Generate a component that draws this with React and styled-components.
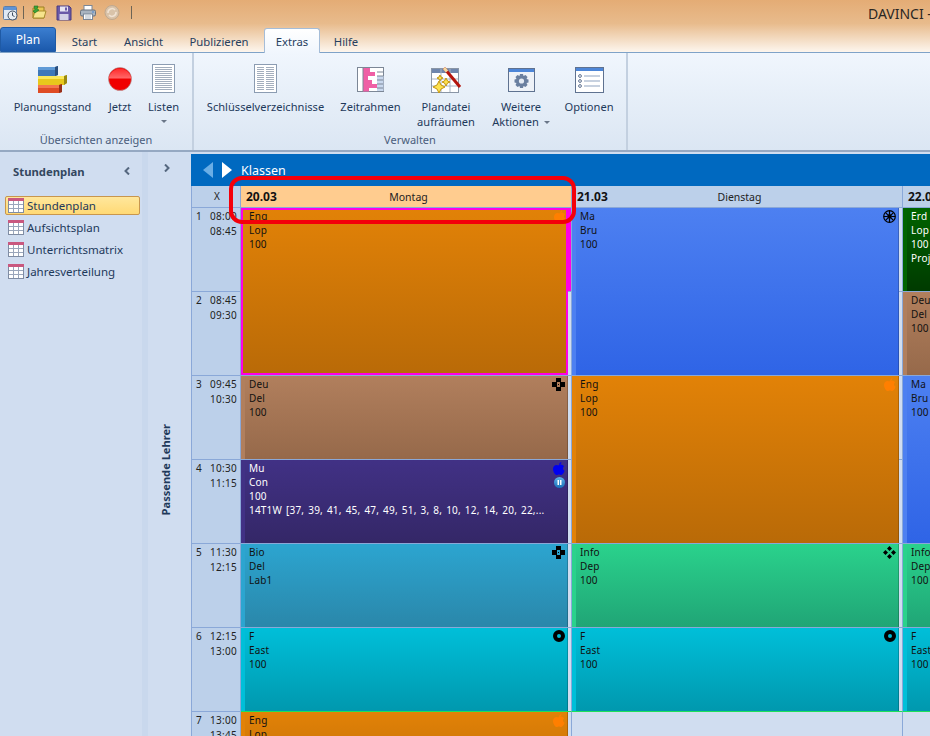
import React from 'react';
import styled, { createGlobalStyle } from 'styled-components';

const GlobalStyle = createGlobalStyle`
  html, body {
    margin: 0;
    padding: 0;
    background: #d0ddf0;
  }
  * {
    box-sizing: border-box;
  }
`;

const uiFont = `"Noto Sans", "Liberation Sans", sans-serif`;
const LINE = '#8aa8d8';
const PALE = '#d0ddf0';
const HEAD = '#bcd0ea';

const Page = styled.div`
  width: 930px;
  height: 736px;
  overflow: hidden;
  display: flex;
  flex-direction: column;
  font-family: ${uiFont};
  font-size: 11px;
  color: #1e395b;
`;

const TitleBar = styled.div`
  height: 53px;
  flex: none;
  display: flex;
  flex-direction: column;
  background: linear-gradient(#e4ac75 0%, #e8bb8c 45%, #fdf6ee 100%);
  border-bottom: 1px solid #7fa3c8;
`;

const TitleRow = styled.div`
  height: 27px;
  display: flex;
  align-items: flex-start;
  justify-content: space-between;
`;

const QuickAccess = styled.div`
  display: flex;
  align-items: center;
  height: 25px;
  padding-left: 3px;
`;

const QuickIcon = styled.span`
  display: flex;
  margin-right: ${({ $gap }) => $gap}px;
`;

const QuickDivider = styled.span`
  width: 1px;
  height: 13px;
  background: #6d6455;
  margin-right: ${({ $gap }) => $gap}px;
`;

const AppTitle = styled.div`
  width: 62px;
  white-space: nowrap;
  overflow: hidden;
  font-size: 14px;
  line-height: 27px;
  color: #2b2723;
`;

const TabRow = styled.div`
  display: flex;
  height: 25px;
  align-items: flex-end;
`;

const PlanTab = styled.div`
  width: 56px;
  height: 25px;
  border-radius: 3px 3px 0 0;
  background: linear-gradient(#3b7ed0, #1b59ac);
  border: 1px solid #1f5aa5;
  color: #fff;
  font-size: 12px;
  line-height: 23px;
  text-align: center;
`;

const Tab = styled.div`
  width: ${({ $w }) => $w}px;
  height: ${({ $active }) => ($active ? 25 : 24)}px;
  margin-bottom: ${({ $active }) => ($active ? -1 : 0)}px;
  text-align: center;
  font-size: 11.3px;
  line-height: 27px;
  color: #27405f;
  border-radius: 3px 3px 0 0;
  position: relative;
  ${({ $active }) =>
    $active &&
    `
    background: linear-gradient(#fff, #f0f6fd);
    border: 1px solid #a5bdd8;
    border-bottom: none;
    line-height: 26px;
  `}
`;

const Ribbon = styled.div`
  height: 99px;
  flex: none;
  display: flex;
  background: linear-gradient(#f0f6fd, #dbe6f3);
  border-bottom: 2px solid #95a8c2;
`;

const Group = styled.div`
  width: ${({ $w }) => $w}px;
  flex: none;
  display: flex;
  flex-direction: column;
  border-right: 2px solid #c3d0e0;
  padding-left: ${({ $pad }) => $pad}px;
`;

const GroupItems = styled.div`
  height: 79px;
  display: flex;
`;

const GroupLabel = styled.div`
  margin-left: ${({ $pad }) => -$pad}px;
  text-align: center;
  font-size: 11px;
  line-height: 16px;
  color: #4a5d7c;
`;

const RibbonItem = styled.div`
  width: ${({ $w }) => $w}px;
  flex: none;
  display: flex;
  flex-direction: column;
  align-items: center;
`;

const IconSlot = styled.div`
  height: 46px;
  padding-top: ${({ $pad }) => $pad}px;
  display: flex;
  justify-content: center;
`;

const ItemLabel = styled.div`
  font-size: 11.1px;
  line-height: 15px;
  text-align: center;
  white-space: nowrap;
  color: #1e395b;
`;

const Caret = styled.span`
  display: ${({ $inline }) => ($inline ? 'inline-block' : 'block')};
  width: 0;
  height: 0;
  margin: ${({ $inline }) => ($inline ? '0 0 2px 5px' : '6px auto 0')};
  border-left: 3px solid transparent;
  border-right: 3px solid transparent;
  border-top: 3px solid #6a7688;
`;

const Body = styled.div`
  flex: 1;
  min-height: 0;
  display: flex;
`;

const Sidebar = styled.div`
  width: 142px;
  flex: none;
  padding: 10px 2px 0 5px;
  background: ${PALE};
`;

const SidebarTitle = styled.div`
  display: flex;
  align-items: center;
  justify-content: space-between;
  height: 18px;
  padding: 0 10px 0 8px;
  font-size: 11.3px;
  font-weight: 700;
  color: #33475f;
`;

const NavList = styled.div`
  margin-top: 16px;
  display: flex;
  flex-direction: column;
  gap: 3px;
`;

const NavItem = styled.div`
  height: 19px;
  display: flex;
  align-items: center;
  gap: 3px;
  padding-left: 2px;
  font-size: 11.5px;
  color: #1e395b;
  border-radius: 2px;
  border: 1px solid ${({ $active }) => ($active ? '#c8964e' : 'transparent')};
  background: ${({ $active }) => ($active ? 'linear-gradient(#ffe79c, #ffd975)' : 'none')};
`;

const LehrerStrip = styled.div`
  width: 49px;
  flex: none;
  display: flex;
  flex-direction: column;
  align-items: center;
  padding-top: 12px;
  background: linear-gradient(90deg, #c9d8ed 0, #c9d8ed 6px, ${PALE} 6px);
`;

const StripLabel = styled.div`
  margin: 252px 3px 0 0;
  writing-mode: vertical-rl;
  transform: rotate(180deg);
  font-size: 11.1px;
  font-weight: 700;
  color: #1e395b;
`;

const Main = styled.div`
  flex: 1;
  min-width: 0;
  position: relative;
  overflow: hidden;
  display: flex;
  flex-direction: column;
  margin-top: 2px;
`;

const BlueBar = styled.div`
  height: 32px;
  flex: none;
  display: flex;
  align-items: center;
  padding-left: 12px;
  background: #0069c0;
  color: #fff;
  font-size: 12.5px;
`;

const Arrow = styled.span`
  width: 0;
  height: 0;
  border-top: 8px solid transparent;
  border-bottom: 8px solid transparent;
  ${({ $dir, $color }) =>
    $dir === 'left' ? `border-right: 10px solid ${$color};` : `border-left: 10px solid ${$color};`}
  margin-right: ${({ $gap }) => $gap}px;
`;

const Plan = styled.div`
  display: grid;
  grid-template-columns: 50px repeat(3, 331px);
  grid-template-rows: 22px repeat(7, 84px);
  grid-auto-flow: column;
  width: 1043px;
`;

const CornerCell = styled.div`
  background: ${HEAD};
  border-left: 1px solid ${LINE};
  border-right: 1px solid ${LINE};
  border-bottom: 1px solid ${LINE};
  padding-left: 2px;
  text-align: center;
  font-size: 10px;
  line-height: 20px;
  color: #222;
`;

const DayHead = styled.div`
  display: grid;
  grid-template-columns: 1fr auto 1fr;
  align-items: center;
  padding-left: 5px;
  background: ${({ $active }) => ($active ? '#ffcc8f' : HEAD)};
  border-right: 1px solid ${LINE};
  border-bottom: 1px solid ${LINE};
  color: #222;
  font-size: 10.5px;
`;

const DayDate = styled.span`
  font-weight: 700;
  font-size: 12px;
  color: #111;
`;

const TimeCell = styled.div`
  display: grid;
  grid-template-columns: 1fr auto;
  grid-auto-rows: 15px;
  padding: 1px 3px 0 4px;
  background: ${HEAD};
  border-left: 1px solid ${LINE};
  border-right: 1px solid ${LINE};
  border-bottom: 1px solid ${LINE};
  font-size: 10px;
  letter-spacing: 0.3px;
  line-height: 15px;
  color: #222;
`;

const TimeValue = styled.span`
  grid-column: 2;
  text-align: right;
`;

// one lesson place in a day, spans as many rows as the lesson takes
const Slot = styled.div`
  grid-row: span ${({ $span }) => $span || 1};
  display: flex;
  padding-right: 3px;
  border-right: 1px solid ${LINE};
  border-bottom: 1px solid ${({ $now }) => ($now ? '#1fe05a' : LINE)};
  background: ${({ $conflict }) =>
    $conflict
      ? `linear-gradient(#ff00e6 83px, ${LINE} 83px, ${LINE} 84px, ${PALE} 84px)`
      : `repeating-linear-gradient(${PALE} 0, ${PALE} 83px, ${LINE} 83px, ${LINE} 84px)`};
`;

const Lesson = styled.div`
  flex: 1;
  min-width: 0;
  position: relative;
  padding: 1px 0 0 4px;
  font-size: 10px;
  letter-spacing: 0.2px;
  word-spacing: 1.2px;
  line-height: 14px;
  white-space: nowrap;
  color: ${({ $light }) => ($light ? '#fff' : '#111')};
  background: linear-gradient(${({ $top }) => $top}, ${({ $bottom }) => $bottom});
  border-left: 4px solid ${({ $top }) => $top};
  border-right: 1px solid rgba(0, 0, 0, 0.2);
  ${({ $marked }) =>
    $marked &&
    `
    border: none;
    padding-left: 8px;
    box-shadow: inset 0 0 0 2px #ff00e6;
  `}
`;

const LessonIcons = styled.div`
  position: absolute;
  top: 2px;
  right: 2px;
  display: flex;
  flex-direction: column;
  align-items: center;
  gap: 2px;
`;

const RedFrame = styled.div`
  position: absolute;
  left: 38px;
  top: 22px;
  width: 347px;
  height: 48px;
  border: 4px solid #f4000a;
  border-radius: 13px;
  pointer-events: none;
`;

const AppIcon = () => (
  <svg width="15" height="16" viewBox="0 0 15 16">
    <rect x="0.5" y="1.5" width="13" height="13" rx="1" fill="#dfe9f5" stroke="#5f7ea6" />
    <rect x="1" y="2" width="12" height="3" fill="#5d93d6" />
    <circle cx="9.5" cy="10.5" r="4.5" fill="#e8edf2" stroke="#3d4c5d" />
    <path d="M9.5 7.5V10.5L11.5 11.5" fill="none" stroke="#3d4c5d" />
  </svg>
);

const OpenIcon = () => (
  <svg width="15" height="15" viewBox="0 0 15 15">
    <path d="M1 3H5L6 2H12V13H1Z" fill="#e9c655" stroke="#9b7f22" />
    <path d="M3 6H14L12 13H1Z" fill="#f6e38c" stroke="#a98c2c" />
    <path d="M2 1L6 1 5 4 7 5 3 8 1 6 3 5Z" fill="#3aa53a" stroke="#1d701d" strokeWidth="0.6" />
  </svg>
);

const SaveIcon = () => (
  <svg width="16" height="16" viewBox="0 0 16 16">
    <path d="M1 1H13L15 3V15H1Z" fill="#6b5aa8" stroke="#493b80" />
    <rect x="4" y="1.5" width="8" height="5" fill="#e7e5f2" />
    <rect x="3.5" y="9" width="9" height="6" fill="#d5d2e6" />
    <rect x="9" y="2.5" width="2" height="3" fill="#6b5aa8" />
  </svg>
);

const PrintIcon = () => (
  <svg width="16" height="15" viewBox="0 0 16 15">
    <rect x="4" y="0.5" width="8" height="5" fill="#fff" stroke="#7b8797" />
    <rect x="0.5" y="5" width="15" height="6" rx="1.5" fill="#a9b4c0" stroke="#66717e" />
    <rect x="3.5" y="9" width="9" height="5.5" fill="#fff" stroke="#7b8797" />
    <path d="M5 11H11M5 13H11" stroke="#a9b4c0" />
    <circle cx="13" cy="7" r="0.8" fill="#3f7fd0" />
  </svg>
);

const RedoIcon = () => (
  <svg width="16" height="15" viewBox="0 0 16 15">
    <circle cx="8" cy="7.5" r="7" fill="#d9c3a9" stroke="#bfa88f" />
    <path d="M4 8A4 4 0 0 1 11 5M12 7A4 4 0 0 1 5 10" fill="none" stroke="#f0e2d2" strokeWidth="1.6" />
  </svg>
);

const BarsIcon = () => (
  <svg width="30" height="28" viewBox="0 0 30 28">
    <path d="M0 1H17L20 0V9L17 10H0Z" fill="#3f78b8" />
    <path d="M0 1H17V4H0Z" fill="#5f9ad6" />
    <path d="M17 1L20 0V9L17 10Z" fill="#2b4f7e" />
    <path d="M0 10H26L29 9V17L26 19H0Z" fill="#e8c81c" />
    <path d="M0 10H26V13H0Z" fill="#fbe85a" />
    <path d="M26 10L29 9V17L26 19Z" fill="#9a8a10" />
    <path d="M0 19H21L24 18V26L21 27H0Z" fill="#df4c24" />
    <path d="M0 19H21V22H0Z" fill="#f4774e" />
    <path d="M21 19L24 18V26L21 27Z" fill="#97301a" />
  </svg>
);

const NowIcon = () => (
  <svg width="24" height="24" viewBox="0 0 24 24">
    <defs>
      <linearGradient id="nowTop" x1="0" y1="0" x2="0" y2="1">
        <stop offset="0" stopColor="#ff2a2a" />
        <stop offset="1" stopColor="#ff6a6a" />
      </linearGradient>
    </defs>
    <circle cx="12" cy="12" r="11.5" fill="#f00000" stroke="#a8a0a0" strokeWidth="0.6" />
    <path d="M0.7 11.5A11.4 11.4 0 0 1 23.3 11.5Z" fill="url(#nowTop)" />
  </svg>
);

const pageLines = (x1, x2, y0, n, step) =>
  Array.from({ length: n }, (_, i) => `M${x1} ${y0 + i * step}H${x2}`).join('');

const ListIcon = () => (
  <svg width="23" height="29" viewBox="0 0 23 29">
    <rect x="0.5" y="0.5" width="22" height="28" fill="#fff" stroke="#8b9cb2" />
    <path d={pageLines(3, 20, 3.5, 12, 2)} stroke="#a3aebd" />
  </svg>
);

const KeysIcon = () => (
  <svg width="23" height="29" viewBox="0 0 23 29">
    <rect x="0.5" y="0.5" width="22" height="28" fill="#fff" stroke="#8b9cb2" />
    <path d={pageLines(3, 10, 3.5, 12, 2) + pageLines(12, 20, 3.5, 12, 2)} stroke="#a3aebd" />
  </svg>
);

const FrameIcon = () => (
  <svg width="28" height="26" viewBox="0 0 28 26">
    <rect x="0.5" y="0.5" width="26" height="24" fill="#fff" stroke="#7c8796" />
    <rect x="6" y="1" width="7" height="4" fill="#ef5fa5" />
    <rect x="6" y="5" width="12" height="4" fill="#ef5fa5" />
    <rect x="6" y="9" width="5" height="4" fill="#ef5fa5" />
    <rect x="6" y="13" width="9" height="4" fill="#ef5fa5" />
    <rect x="6" y="17" width="14" height="4" fill="#ef5fa5" />
    <rect x="6" y="21" width="6" height="3.5" fill="#ef5fa5" />
    <rect x="20" y="9" width="6.5" height="15" fill="#c9d8ee" />
    <path d="M20 5H26M20 9H26M20 13H26M20 17H26M20 21H26" stroke="#7c8796" />
    <path d="M6 1V24" stroke="#7c8796" />
  </svg>
);

const CleanIcon = () => (
  <svg width="31" height="26" viewBox="0 0 31 26">
    <rect x="0.5" y="1.5" width="27" height="24" fill="#fff" stroke="#8a96a6" />
    <rect x="1" y="2" width="26" height="4" fill="#6f86ad" />
    <path d="M10 2V25M19 2V25M1 12H27M1 19H27" stroke="#a7b2c2" />
    <path d="M8 14L10 18 14 20 10 22 8 26 6 22 2 20 6 18Z" fill="#fde24f" stroke="#c2940f" />
    <path d="M15 11L16.5 14 19 15 16.5 16 15 19 13.5 16 11 15 13.5 14Z" fill="#fde24f" stroke="#c2940f" />
    <path d="M9 8L10 10 12 11 10 12 9 14 8 12 6 11 8 10Z" fill="#fde24f" stroke="#c2940f" />
    <path d="M13 1L29 20" stroke="#b5140c" strokeWidth="3" />
    <path d="M13 1L16 4.5" stroke="#f5d9a0" strokeWidth="3" />
  </svg>
);

const GearIcon = () => (
  <svg width="27" height="24" viewBox="0 0 27 24">
    <rect x="0.5" y="0.5" width="26" height="23" fill="#eef2f8" stroke="#5f7290" />
    <rect x="1" y="1" width="25" height="3" fill="#4d86d8" />
    <path
      d="M12 6H15L15.5 8 17.5 7 19.5 9 18.5 11 20.5 11.5V14.5L18.5 15 19.5 17 17.5 19 15.5 18 15 20H12L11.5 18 9.5 19 7.5 17 8.5 15 6.5 14.5V11.5L8.5 11 7.5 9 9.5 7 11.5 8Z"
      fill="#6a7f9f"
    />
    <circle cx="13.5" cy="13" r="2.6" fill="#e4eaf3" />
  </svg>
);

const OptionsIcon = () => (
  <svg width="29" height="26" viewBox="0 0 29 26">
    <rect x="0.5" y="0.5" width="28" height="25" fill="#fff" stroke="#5f7290" />
    <rect x="1" y="1" width="27" height="3" fill="#4d86d8" />
    <path d="M9 9H25M9 14H25M9 19H25" stroke="#8fa3c0" />
    <circle cx="5" cy="9" r="1.4" fill="none" stroke="#5f7290" />
    <circle cx="5" cy="14" r="1.4" fill="none" stroke="#5f7290" />
    <circle cx="5" cy="19" r="1.4" fill="none" stroke="#5f7290" />
  </svg>
);

const TableIcon = () => (
  <svg width="16" height="15" viewBox="0 0 16 15">
    <rect x="0.5" y="0.5" width="15" height="14" fill="#fff" stroke="#7f8ca3" />
    <rect x="0" y="0" width="16" height="3" fill="#c9587f" />
    <path d="M5.5 3V14M10.5 3V14M1 6.5H15M1 10.5H15" stroke="#9aa6bb" />
  </svg>
);

const Chevron = ({ dir }) => (
  <svg width="6" height="8" viewBox="0 0 6 8">
    <path
      d={dir === 'left' ? 'M5 0.5L1.5 4 5 7.5' : 'M1 0.5L4.5 4 1 7.5'}
      fill="none"
      stroke="#55677f"
      strokeWidth="2"
    />
  </svg>
);

const FlowerMark = () => (
  <svg width="13" height="13" viewBox="0 0 13 13">
    <circle cx="6.5" cy="6.5" r="5.8" fill="none" stroke="#000" strokeWidth="1.2" />
    <circle cx="6.5" cy="6.5" r="2.4" fill="#000" />
    <path
      d="M6.5 1V4M6.5 9V12M1 6.5H4M9 6.5H12M2.8 2.8L4.8 4.8M8.2 8.2L10.2 10.2M10.2 2.8L8.2 4.8M4.8 8.2L2.8 10.2"
      stroke="#000"
      strokeWidth="1.2"
    />
  </svg>
);

const BlocksMark = () => (
  <svg width="13" height="13" viewBox="0 0 13 13">
    <path d="M4 0H9V4H4ZM0 4H5V9H0ZM8 4H13V9H8ZM4 9H9V13H4ZM6 6H7V7H6Z" fill="#000" />
  </svg>
);

const DiamondsMark = () => (
  <svg width="13" height="13" viewBox="0 0 13 13">
    <path
      d="M6.5 0L9 2.5 6.5 5 4 2.5ZM2.5 4L5 6.5 2.5 9 0 6.5ZM10.5 4L13 6.5 10.5 9 8 6.5ZM6.5 8L9 10.5 6.5 13 4 10.5Z"
      fill="#000"
    />
  </svg>
);

const RingMark = () => (
  <svg width="12" height="12" viewBox="0 0 12 12">
    <path
      fillRule="evenodd"
      d="M6 0A6 6 0 1 1 6 12A6 6 0 1 1 6 0ZM6 4A2 2 0 1 0 6 8A2 2 0 1 0 6 4Z"
      fill="#000"
    />
  </svg>
);

const AppleMark = ({ color }) => (
  <svg width="12" height="13" viewBox="0 0 12 13">
    <path
      d="M6 3.2C7 2.4 8.6 2.2 10 3.2 11 4 11 4.6 11 4.6 9.4 5.6 9.6 8 11.6 8.8 11 10.6 9.6 13 8.2 13 7.2 13 7 12.4 6 12.4S4.6 13 3.6 13C2 13 0 9.6 0 7 0 4.4 1.8 3 3.4 3 4.6 3 5.2 3.6 6 3.2Z"
      fill={color}
    />
    <path d="M6 3C6 1.6 7 0.4 8.4 0 8.6 1.6 7.4 2.8 6 3Z" fill={color} />
  </svg>
);

const PauseMark = () => (
  <svg width="11" height="11" viewBox="0 0 11 11">
    <defs>
      <linearGradient id="pauseFill" x1="0" y1="0" x2="0" y2="1">
        <stop offset="0" stopColor="#5fb4ea" />
        <stop offset="1" stopColor="#1a6fb8" />
      </linearGradient>
    </defs>
    <circle cx="5.5" cy="5.5" r="5.5" fill="url(#pauseFill)" />
    <path d="M3.5 3H5V8H3.5ZM6 3H7.5V8H6Z" fill="#fff" />
  </svg>
);

const palette = {
  orange: { top: '#e28207', bottom: '#b96a07' },
  blue: { top: '#4d80f1', bottom: '#2f64e6' },
  brown: { top: '#b17f5d', bottom: '#96694a' },
  purple: { top: '#413185', bottom: '#342767', light: true },
  teal: { top: '#2ca5d0', bottom: '#2a87aa' },
  green: { top: '#2ad28c', bottom: '#20a576' },
  cyan: { top: '#00bfd9', bottom: '#0098ae' },
  forest: { top: '#006400', bottom: '#003a00', light: true },
};

const ENG = {
  color: 'orange',
  lines: ['Eng', 'Lop', '100'],
  marks: [<AppleMark key="a" color="#ff7f00" />],
};
const MA = { color: 'blue', lines: ['Ma', 'Bru', '100'], marks: [<FlowerMark key="a" />] };
const DEU = { color: 'brown', lines: ['Deu', 'Del', '100'], marks: [<BlocksMark key="a" />] };
const INFO = { color: 'green', lines: ['Info', 'Dep', '100'], marks: [<DiamondsMark key="a" />] };
const FR = { color: 'cyan', lines: ['F', 'East', '100'], marks: [<RingMark key="a" />] };

const days = [
  {
    date: '20.03',
    name: 'Montag',
    active: true,
    lessons: [
      { ...ENG, span: 2, marked: true },
      DEU,
      {
        color: 'purple',
        lines: ['Mu', 'Con', '100', '14T1W [37, 39, 41, 45, 47, 49, 51, 3, 8, 10, 12, 14, 20, 22,...'],
        marks: [<AppleMark key="a" color="#0000f0" />, <PauseMark key="b" />],
      },
      { color: 'teal', lines: ['Bio', 'Del', 'Lab1'], marks: [<BlocksMark key="a" />] },
      { ...FR, now: true },
      ENG,
    ],
  },
  {
    date: '21.03',
    name: 'Dienstag',
    lessons: [
      { ...MA, span: 2 },
      { ...ENG, span: 2 },
      INFO,
      { ...FR, now: true },
      null,
    ],
  },
  {
    date: '22.03',
    name: 'Mittwoch',
    lessons: [
      { color: 'forest', lines: ['Erd', 'Lop', '100', 'Proj'], marks: [] },
      DEU,
      { ...MA, span: 2 },
      INFO,
      { ...FR, now: true },
      null,
    ],
  },
];

const periods = [
  ['08:00', '08:45'],
  ['08:45', '09:30'],
  ['09:45', '10:30'],
  ['10:30', '11:15'],
  ['11:30', '12:15'],
  ['12:15', '13:00'],
  ['13:00', '13:45'],
];

const firstGroup = [
  { label: 'Planungsstand', icon: <BarsIcon />, w: 95, pad: 13 },
  { label: 'Jetzt', icon: <NowIcon />, w: 40, pad: 14 },
  { label: 'Listen', icon: <ListIcon />, w: 47, pad: 11, caret: true },
];

const secondGroup = [
  { label: 'Schlüsselverzeichnisse', icon: <KeysIcon />, w: 133, pad: 11 },
  { label: 'Zeitrahmen', icon: <FrameIcon />, w: 77, pad: 14 },
  { label: ['Plandatei', 'aufräumen'], icon: <CleanIcon />, w: 74, pad: 14 },
  { label: ['Weitere', 'Aktionen'], icon: <GearIcon />, w: 76, pad: 15, inlineCaret: true },
  { label: 'Optionen', icon: <OptionsIcon />, w: 60, pad: 14 },
];

const navItems = ['Stundenplan', 'Aufsichtsplan', 'Unterrichtsmatrix', 'Jahresverteilung'];

function RibbonButton({ item }) {
  const lines = Array.isArray(item.label) ? item.label : [item.label];
  return (
    <RibbonItem $w={item.w}>
      <IconSlot $pad={item.pad}>{item.icon}</IconSlot>
      {lines.map((line, i) => (
        <ItemLabel key={line}>
          {line}
          {item.inlineCaret && i === 1 && <Caret $inline />}
        </ItemLabel>
      ))}
      {item.caret && <Caret />}
    </RibbonItem>
  );
}

function LessonSlot({ lesson, conflict }) {
  if (!lesson) return <Slot />;
  const tone = palette[lesson.color];
  return (
    <Slot $span={lesson.span} $now={lesson.now} $conflict={conflict}>
      <Lesson $top={tone.top} $bottom={tone.bottom} $light={tone.light} $marked={lesson.marked}>
        {lesson.lines.map((line, i) => (
          <div key={i}>{line}</div>
        ))}
        <LessonIcons>{lesson.marks}</LessonIcons>
      </Lesson>
    </Slot>
  );
}

export default function App() {
  return (
    <Page>
      <GlobalStyle />
      <TitleBar>
        <TitleRow>
          <QuickAccess>
            <QuickIcon $gap={5}>
              <AppIcon />
            </QuickIcon>
            <QuickDivider $gap={8} />
            <QuickIcon $gap={9}>
              <OpenIcon />
            </QuickIcon>
            <QuickIcon $gap={8}>
              <SaveIcon />
            </QuickIcon>
            <QuickIcon $gap={8}>
              <PrintIcon />
            </QuickIcon>
            <QuickIcon $gap={11}>
              <RedoIcon />
            </QuickIcon>
            <QuickDivider $gap={0} />
          </QuickAccess>
          <AppTitle>DAVINCI - Stundenplan</AppTitle>
        </TitleRow>
        <TabRow>
          <PlanTab>Plan</PlanTab>
          <Tab $w={57}>Start</Tab>
          <Tab $w={61}>Ansicht</Tab>
          <Tab $w={90}>Publizieren</Tab>
          <Tab $w={56} $active>
            Extras
          </Tab>
          <Tab $w={52}>Hilfe</Tab>
        </TabRow>
      </TitleBar>

      <Ribbon>
        <Group $w={194} $pad={5}>
          <GroupItems>
            {firstGroup.map((item) => (
              <RibbonButton key={item.label} item={item} />
            ))}
          </GroupItems>
          <GroupLabel $pad={5}>Übersichten anzeigen</GroupLabel>
        </Group>
        <Group $w={434} $pad={5}>
          <GroupItems>
            {secondGroup.map((item) => (
              <RibbonButton key={String(item.label)} item={item} />
            ))}
          </GroupItems>
          <GroupLabel $pad={5}>Verwalten</GroupLabel>
        </Group>
      </Ribbon>

      <Body>
        <Sidebar>
          <SidebarTitle>
            Stundenplan
            <Chevron dir="left" />
          </SidebarTitle>
          <NavList>
            {navItems.map((name, i) => (
              <NavItem key={name} $active={i === 0}>
                <TableIcon />
                {name}
              </NavItem>
            ))}
          </NavList>
        </Sidebar>

        <LehrerStrip>
          <Chevron dir="right" />
          <StripLabel>Passende Lehrer</StripLabel>
        </LehrerStrip>

        <Main>
          <BlueBar>
            <Arrow $dir="left" $color="#6aaee6" $gap={9} />
            <Arrow $dir="right" $color="#fff" $gap={9} />
            Klassen
          </BlueBar>
          <Plan>
            <CornerCell>X</CornerCell>
            {periods.map(([from, to], i) => (
              <TimeCell key={from}>
                <span>{i + 1}</span>
                <TimeValue>{from}</TimeValue>
                <TimeValue>{to}</TimeValue>
              </TimeCell>
            ))}
            {days.map((day) => (
              <React.Fragment key={day.date}>
                <DayHead $active={day.active}>
                  <DayDate>{day.date}</DayDate>
                  <span>{day.name}</span>
                </DayHead>
                {day.lessons.map((lesson, i) => (
                  <LessonSlot key={i} lesson={lesson} conflict={lesson && lesson.marked} />
                ))}
              </React.Fragment>
            ))}
          </Plan>
          <RedFrame />
        </Main>
      </Body>
    </Page>
  );
}
